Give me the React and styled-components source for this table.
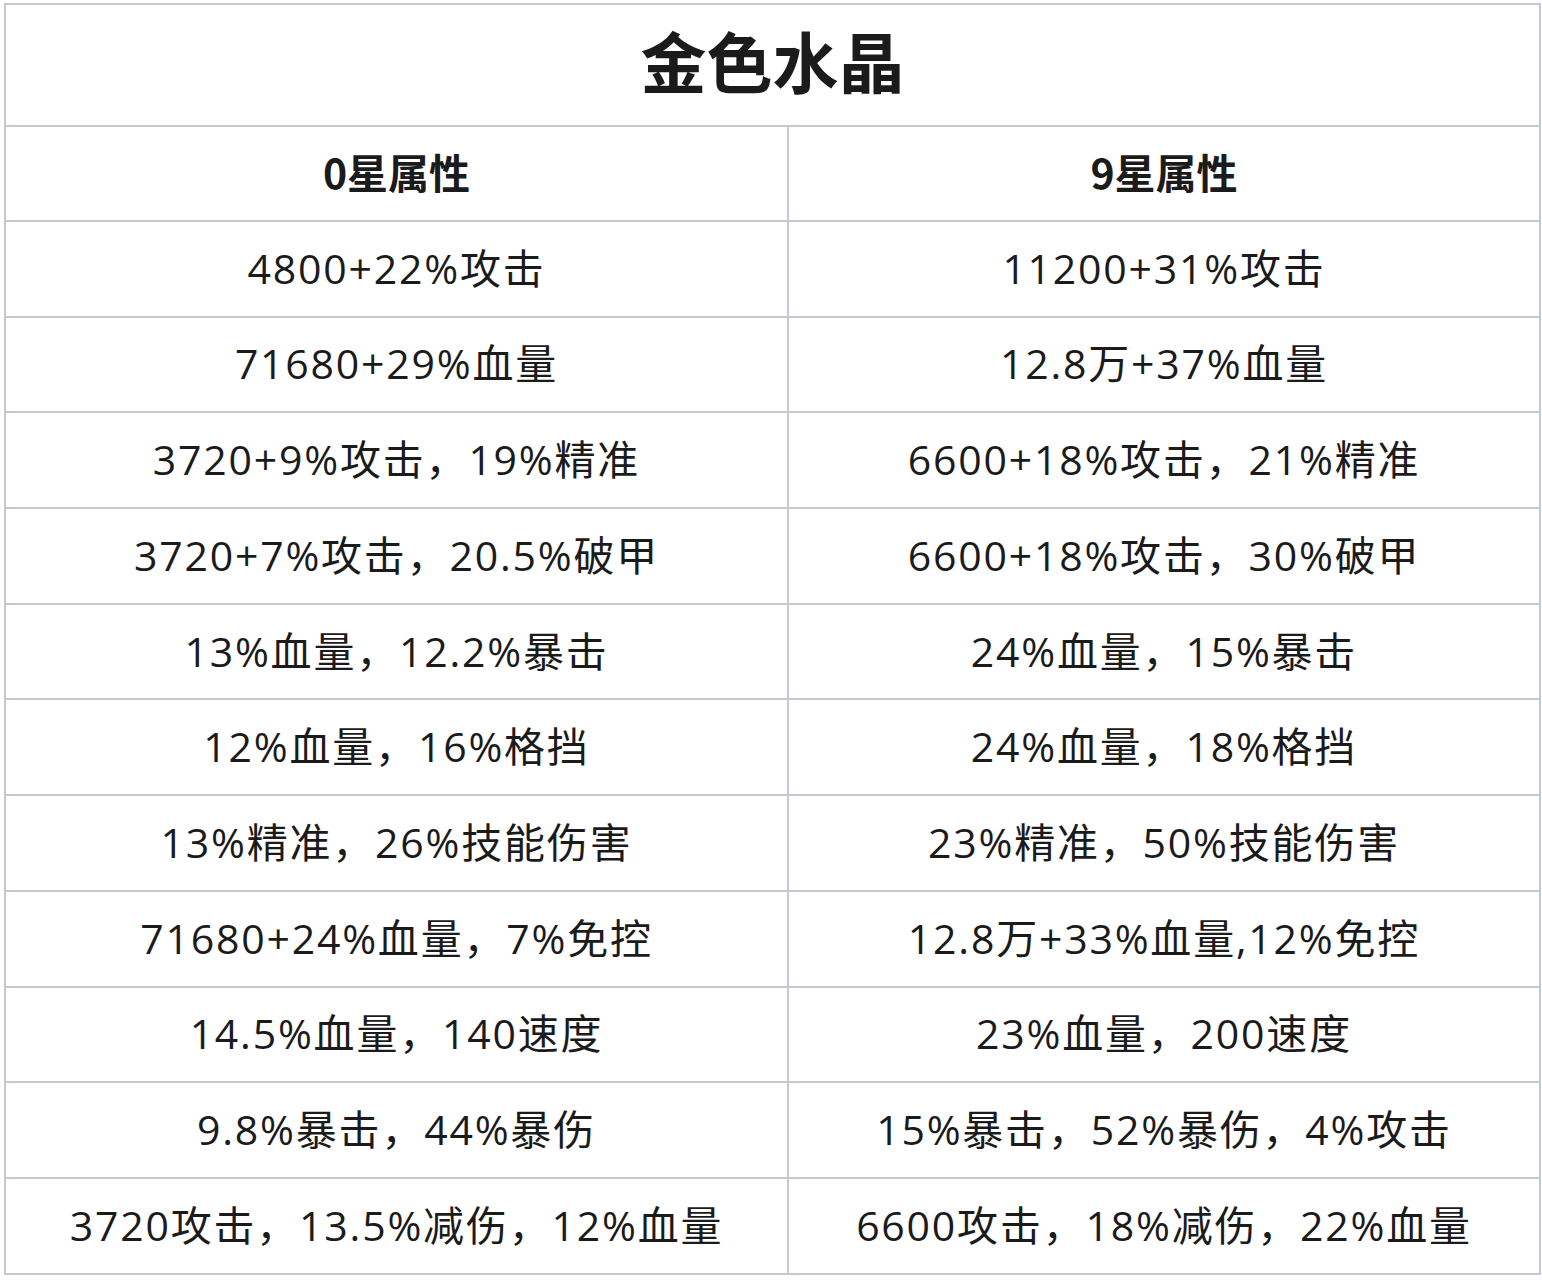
import React from "react";
import styled, { createGlobalStyle } from "styled-components";

const GlobalStyle = createGlobalStyle`
  html, body {
    margin: 0;
    padding: 0;
    background: #ffffff;
  }
  body {
    font-family: "Open Sans", "Noto Sans CJK SC", sans-serif;
    color: #1b1b1b;
  }
`;

const rows = [
  ["4800+22%攻击", "11200+31%攻击"],
  ["71680+29%血量", "12.8万+37%血量"],
  ["3720+9%攻击，19%精准", "6600+18%攻击，21%精准"],
  ["3720+7%攻击，20.5%破甲", "6600+18%攻击，30%破甲"],
  ["13%血量，12.2%暴击", "24%血量，15%暴击"],
  ["12%血量，16%格挡", "24%血量，18%格挡"],
  ["13%精准，26%技能伤害", "23%精准，50%技能伤害"],
  ["71680+24%血量，7%免控", "12.8万+33%血量,12%免控"],
  ["14.5%血量，140速度", "23%血量，200速度"],
  ["9.8%暴击，44%暴伤", "15%暴击，52%暴伤，4%攻击"],
  ["3720攻击，13.5%减伤，12%血量", "6600攻击，18%减伤，22%血量"],
];

const Sheet = styled.div`
  padding: 3px 0 0 4px;
`;

const Table = styled.table`
  border-collapse: collapse;
  table-layout: fixed;
  width: 1535px;
`;

const Cell = styled.td`
  border: 2px solid #c4c8d0;
  text-align: center;
  vertical-align: middle;
  padding: 0 0 ${(p) => p.$lift}px 0;
  height: ${(p) => p.$h}px;
  box-sizing: border-box;
  font-size: ${(p) => p.$size}px;
  font-weight: ${(p) => (p.$bold ? 700 : 400)};
  font-family: ${(p) =>
    p.$bold
      ? `"Noto Sans CJK SC", sans-serif`
      : `"Open Sans", "Noto Sans CJK SC", sans-serif`};
  letter-spacing: ${(p) => (p.$bold ? 0 : 1.8)}px;
  line-height: 1.2;
  white-space: nowrap;
  color: #1b1b1b;
`;

const App = () => (
  <>
    <GlobalStyle />
    <Sheet>
      <Table>
        <colgroup>
          <col style={{ width: 783 }} />
          <col style={{ width: 752 }} />
        </colgroup>
        <tbody>
          <tr>
            <Cell colSpan={2} $h={122} $size={66} $lift={10} $bold>
              金色水晶
            </Cell>
          </tr>
          <tr>
            <Cell $h={95} $size={41} $lift={3} $bold>
              0星属性
            </Cell>
            <Cell $h={95} $size={41} $lift={3} $bold>
              9星属性
            </Cell>
          </tr>
          {rows.map(([a, b]) => (
            <tr key={a}>
              <Cell $h={95.7} $size={41} $lift={1}>
                {a}
              </Cell>
              <Cell $h={95.7} $size={41} $lift={1}>
                {b}
              </Cell>
            </tr>
          ))}
        </tbody>
      </Table>
    </Sheet>
  </>
);

export default App;
